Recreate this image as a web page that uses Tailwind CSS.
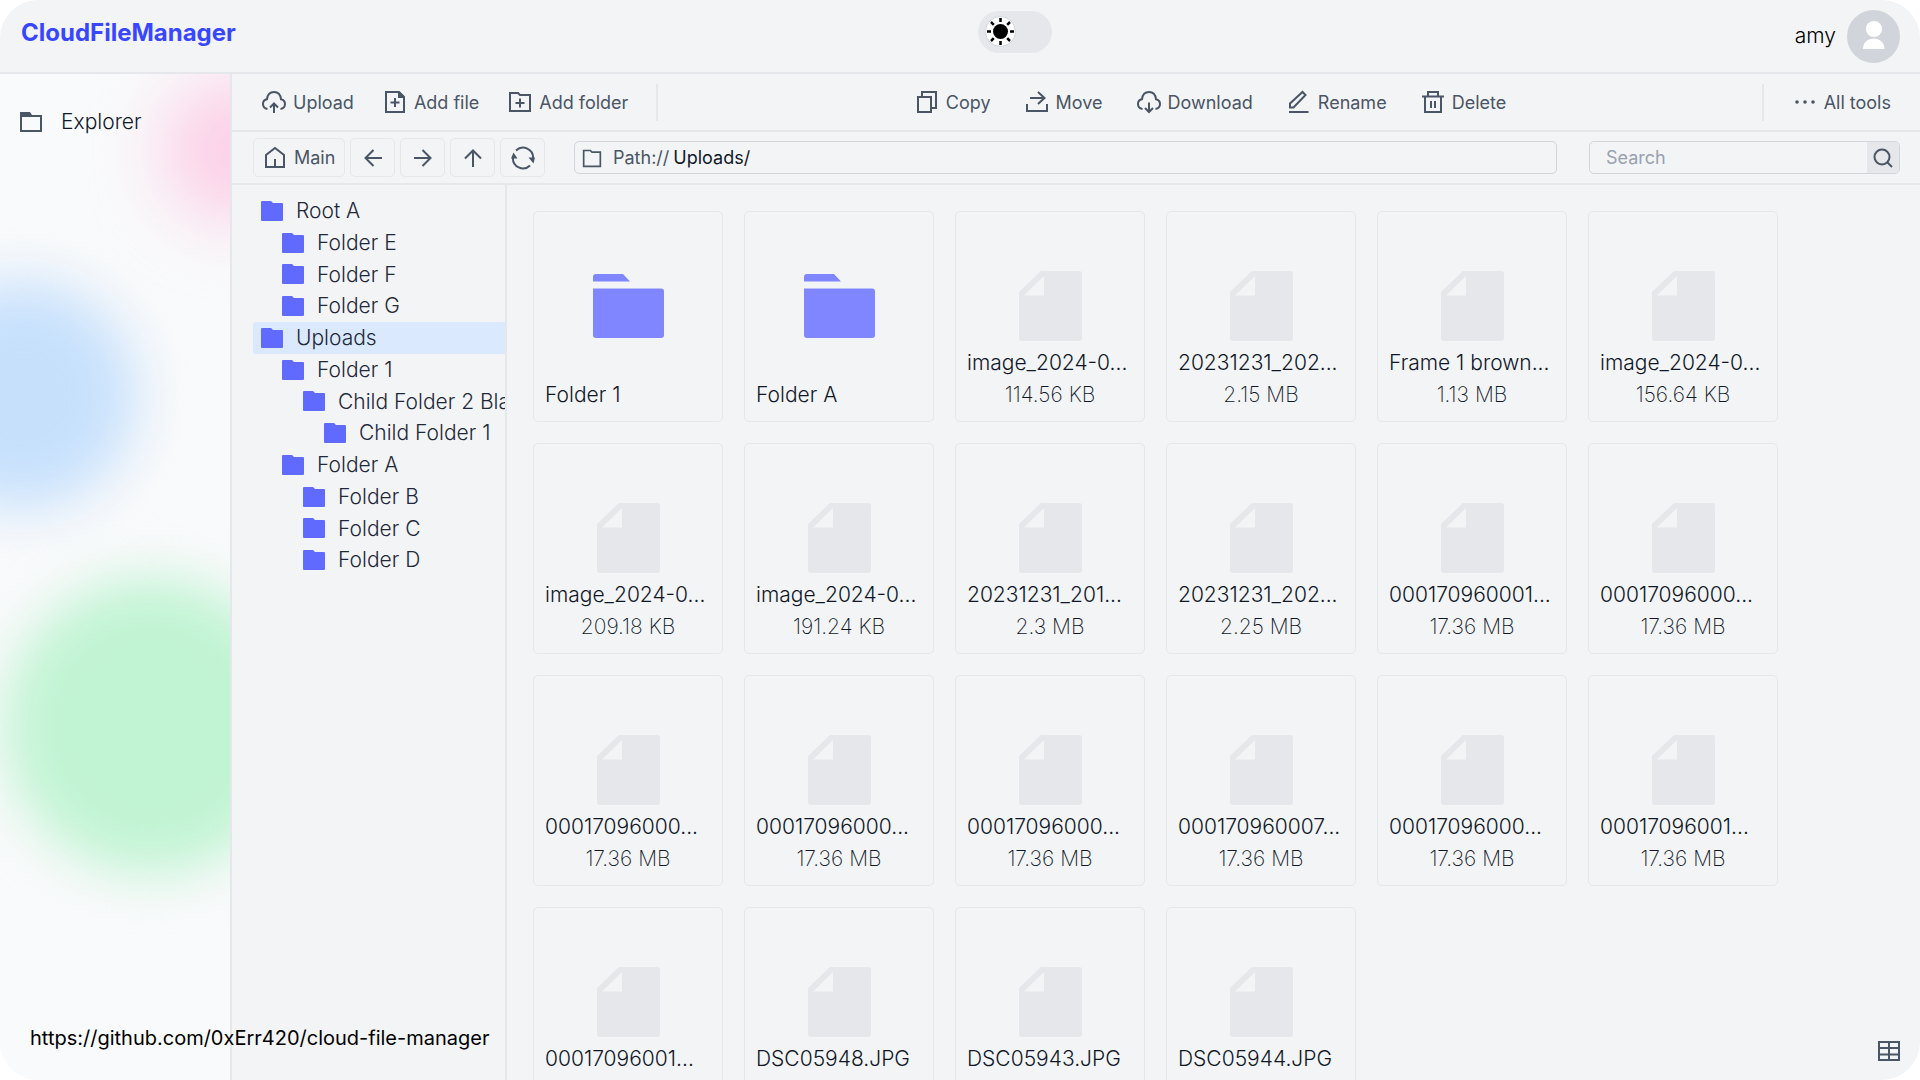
<!DOCTYPE html>
<html lang="en">
<head>
<meta charset="utf-8">
<meta name="viewport" content="width=device-width, initial-scale=1">
<title>CloudFileManager</title>
<script src="https://cdn.jsdelivr.net/npm/@tailwindcss/browser@4"></script>
</head>
<body class="bg-white font-['Inter',sans-serif]">
<svg class="hidden" aria-hidden="true">
  <symbol id="i-folder" viewBox="0 0 24 24"><path d="M2 3h8l2 2h10v17H2z" fill="none" stroke="currentColor" stroke-width="2"/></symbol>
  <symbol id="i-tree" viewBox="0 0 22 20"><path d="M1 0h9l2 2h9q1 0 1 1v16q0 1-1 1H1q-1 0-1-1V1q0-1 1-1z" fill="currentColor"/></symbol>
  <symbol id="i-bigfolder" viewBox="0 0 71 64"><path d="M0 7.500V3Q0 0 3 0H30L37 7.500zM0 14.500H68Q71 14.500 71 17.500V61Q71 64 68 64H3Q0 64 0 61z" fill="currentColor"/></symbol>
  <symbol id="i-file" viewBox="0 0 63 70"><path fill-rule="evenodd" d="M22 0H60Q63 0 63 3V67Q63 70 60 70H3Q0 70 0 67V21zM25 5L5 24.500H25z" fill="currentColor"/></symbol>
</svg>

<div class="relative flex h-screen flex-col overflow-hidden rounded-[38px] bg-gray-100">
  <header class="flex h-[74px] shrink-0 items-start justify-between border-b-2 border-gray-200 pl-[21px] pr-5">
    <a href="#" class="mt-[17px] text-2xl font-bold text-[#3847ff]">CloudFileManager</a>
    <button type="button" role="switch" aria-checked="false" aria-label="Dark theme" class="mt-[11px] flex h-[42px] w-[74px] rounded-full bg-gray-200 pl-[7px] pt-[5px]">
      <svg class="size-[31px]" viewBox="0 0 31 31"><circle cx="15.500" cy="15.500" r="15" fill="#fff" stroke="#d1d5db"/><circle cx="15.500" cy="15.500" r="7.500"/><path d="M15.500 2v4M15.500 25v4M2 15.500h4M25 15.500h4M6 6l2.800 2.800M22.200 22.200L25 25M25 6l-2.800 2.800M8.800 22.200L6 25" stroke="#000" stroke-width="2.500"/></svg>
    </button>
    <div class="mt-[10px] flex items-center gap-[11px]">
      <span class="pb-[2px] text-[21px] font-light">amy</span>
      <svg class="size-[53px]" viewBox="0 0 53 53"><circle cx="26.500" cy="26.500" r="26.500" fill="#d1d5db"/><circle cx="27" cy="19" r="8" fill="#fff"/><path d="M16 39C16 25 37.500 25 37.500 39z" fill="#fff"/></svg>
    </div>
  </header>

  <div class="flex min-h-0 flex-1">
    <aside class="relative w-[232px] shrink-0 overflow-hidden border-r-2 border-gray-200 bg-gray-50">
      <div class="absolute left-[163px] top-[4px] size-[144px] rounded-full bg-[#fccfe7] blur-[34px]"></div>
      <div class="absolute -left-[92px] top-[207px] size-[228px] rounded-full bg-[#c6e0fc] blur-[28px]"></div>
      <div class="absolute left-[3px] top-[504px] size-[296px] rounded-full bg-[#c1f4d3] blur-[26px]"></div>
      <nav class="relative pl-5 pt-8">
        <a href="#" class="flex items-center gap-[19px] text-[21px] leading-8 font-light text-gray-900">
          <svg class="h-5 w-[22px] text-gray-600" viewBox="0 0 22 20"><path d="M1 2v17h20V4H1" fill="none" stroke="currentColor" stroke-width="2"/><path d="M0 0h10l2 3h10v2H0z" fill="currentColor"/></svg>
          Explorer
        </a>
      </nav>
    </aside>

    <main class="flex min-w-0 flex-1 flex-col">
      <div class="flex h-[58px] shrink-0 items-center justify-between border-b-2 border-gray-200 px-[29px] text-[18px] text-gray-600">
        <div class="flex items-center gap-7">
          <button type="button" class="flex items-center gap-[6px]"><svg class="size-[26px]" viewBox="0 0 26 26" fill="none" stroke="currentColor" stroke-width="2"><path d="M6.500 20C3.500 19.500 2 17.500 2 15c0-2.500 1.700-4.500 4-4.800C6.500 6 9 3 13 3s6.500 3 7 7.200c2.500.5 4 2.300 4 4.800 0 2.500-1.500 4.500-4.500 5"/><path d="M13 24v-8M9 18.500l4-4 4 4"/></svg>Upload</button>
          <button type="button" class="flex items-center gap-[6px]"><svg class="size-[26px]" viewBox="0 0 26 26" fill="none" stroke="currentColor" stroke-width="2"><path d="M4 3h13l5 5v15H4zM13 9v9M8.500 13.500h9"/><path d="M16 3h2l4 4v2h-6z" fill="currentColor" stroke="none"/></svg>Add file</button>
          <button type="button" class="flex items-center gap-[6px]"><svg class="size-[26px]" viewBox="0 0 26 26" fill="none" stroke="currentColor" stroke-width="2"><path d="M3 4h8l2 2h10v16H3zM13 9.500v9M8.500 14h9"/></svg>Add folder</button>
          <span class="h-[37px] w-[2px] bg-gray-200"></span>
        </div>
        <div class="flex items-center gap-[33px]">
          <button type="button" class="flex items-center gap-[6px]"><svg class="size-[26px]" viewBox="0 0 26 26" fill="none" stroke="currentColor" stroke-width="2"><path d="M4 8h13v15H4zM8 7V3h14v16h-4"/></svg>Copy</button>
          <button type="button" class="flex items-center gap-[6px]"><svg class="size-[26px]" viewBox="0 0 26 26" fill="none" stroke="currentColor" stroke-width="2"><path d="M3 15v7h20v-7M6 9h14M14 3l6.500 6-6.500 6"/></svg>Move</button>
          <button type="button" class="flex items-center gap-[6px]"><svg class="size-[26px]" viewBox="0 0 26 26" fill="none" stroke="currentColor" stroke-width="2"><path d="M6.500 20C3.500 19.500 2 17.500 2 15c0-2.500 1.700-4.500 4-4.800C6.500 6 9 3 13 3s6.500 3 7 7.200c2.500.5 4 2.300 4 4.800 0 2.500-1.500 4.500-4.500 5"/><path d="M13 13.500v9M9 19l4 4 4-4"/></svg>Download</button>
          <button type="button" class="flex items-center gap-[6px]"><svg class="size-[26px]" viewBox="0 0 26 26" fill="none" stroke="currentColor" stroke-width="2"><path d="M3 23h19.500M4 18.500v-4L16.500 3l3 3L7.500 18.500z"/></svg>Rename</button>
          <button type="button" class="flex items-center gap-[6px]"><svg class="size-[26px]" viewBox="0 0 26 26" fill="none" stroke="currentColor" stroke-width="2"><path d="M2 7.500h22M8 7.500V3h10v4.500M5 7.500V23h16V7.500M11 12v7M15 12v7"/></svg>Delete</button>
        </div>
        <div class="flex items-center gap-7">
          <span class="h-[37px] w-[2px] bg-gray-200"></span>
          <button type="button" class="flex items-center gap-[6px]"><svg class="size-[26px]" viewBox="0 0 26 26" fill="currentColor"><circle cx="5" cy="13" r="1.800"/><circle cx="13" cy="13" r="1.800"/><circle cx="21" cy="13" r="1.800"/></svg>All tools</button>
        </div>
      </div>

      <div class="flex h-[53px] shrink-0 items-center border-b-2 border-gray-200 pl-[21px] pr-5 text-[18px] text-gray-600">
        <div class="flex gap-[5px]">
          <button type="button" class="flex h-[39px] w-[92px] items-center gap-2 rounded-[5px] border border-gray-200 pl-[10px]"><svg class="h-[21px] w-[22px]" viewBox="0 0 22 21" fill="none" stroke="currentColor" stroke-width="2"><path d="M2 20V8l9-7 9 7v12zM11 12v8"/></svg>Main</button>
          <button type="button" aria-label="Back" class="grid h-[39px] w-[45px] place-items-center rounded-[5px] border border-gray-200"><svg class="size-5" viewBox="0 0 20 20" fill="none" stroke="currentColor" stroke-width="2"><path d="M19 10H3M10.500 2L2.500 10l8 8"/></svg></button>
          <button type="button" aria-label="Forward" class="grid h-[39px] w-[45px] place-items-center rounded-[5px] border border-gray-200"><svg class="size-5" viewBox="0 0 20 20" fill="none" stroke="currentColor" stroke-width="2"><path d="M1 10h16M9.500 2l8 8-8 8"/></svg></button>
          <button type="button" aria-label="Up" class="grid h-[39px] w-[45px] place-items-center rounded-[5px] border border-gray-200"><svg class="size-5" viewBox="0 0 20 20" fill="none" stroke="currentColor" stroke-width="2"><path d="M10 19V3M2 10.500l8-8 8 8"/></svg></button>
          <button type="button" aria-label="Refresh" class="grid h-[39px] w-[45px] place-items-center rounded-[5px] border border-gray-200"><svg class="size-6" viewBox="0 0 24 24" fill="none" stroke="currentColor" stroke-width="2"><path d="M5 4.500A10 10 0 0 1 22 12.500M19 19.500A10 10 0 0 1 2 11.500"/><path d="M17.500 11.500H24l-1.500 6zM6.500 12.500H0l2.500-6z" fill="currentColor" stroke="none"/></svg></button>
        </div>
        <div class="ml-[29px] flex h-[33px] flex-1 items-center rounded-[5px] border border-gray-300 pl-[7px]">
          <svg class="size-5"><use href="#i-folder"/></svg>
          <label for="path" class="ml-[11px]">Path://</label>
          <input id="path" type="text" value="Uploads/" class="ml-1 w-full min-w-0 flex-1 text-gray-900 outline-none">
        </div>
        <form class="ml-8 flex h-[33px] w-[311px] overflow-hidden rounded-[5px] border border-gray-300">
          <input type="search" aria-label="Search" placeholder="Search" class="min-w-0 flex-1 pl-4 outline-none placeholder:text-gray-400">
          <button type="button" aria-label="Run search" class="grid w-8 place-items-center bg-gray-200"><svg class="size-5" viewBox="0 0 20 20" fill="none" stroke="currentColor" stroke-width="2"><circle cx="9" cy="9" r="7.500"/><path d="M14.500 14.500L19 19"/></svg></button>
        </form>
      </div>

      <div class="flex min-h-0 flex-1">
        <div class="w-[275px] shrink-0 overflow-hidden border-r-2 border-gray-200 pl-[21px] pt-[10px]">
          <ul id="tree" class="grid h-[381px] grid-rows-12 text-[21px] font-light text-gray-800"></ul>
        </div>
        <div id="files" class="flex min-w-0 flex-1 flex-wrap content-start gap-[21px] overflow-hidden pl-[26px] pr-5 pt-[26px] text-[21px] leading-8 font-light text-gray-900"></div>
      </div>
    </main>
  </div>

  <a href="https://github.com/0xErr420/cloud-file-manager" class="absolute bottom-6 left-[30px] text-[20px] leading-9 text-black">https://github.com/0xErr420/cloud-file-manager</a>
  <button type="button" aria-label="Table view" class="absolute bottom-[19px] right-5 text-gray-600"><svg class="block h-5 w-[22px]" viewBox="0 0 22 20" fill="none" stroke="currentColor" stroke-width="2"><path d="M1 1h20v18H1zM11 1v18M1 7h20M1 13.500h20"/></svg></button>
</div>

<script>
const tree = [['Root A', 0], ['Folder E', 1], ['Folder F', 1], ['Folder G', 1], ['Uploads', 0], ['Folder 1', 1], ['Child Folder 2 Bla', 2], ['Child Folder 1', 3], ['Folder A', 1], ['Folder B', 2], ['Folder C', 2], ['Folder D', 2]];
const indent = ['pl-2', 'pl-[29px]', 'pl-[50px]', 'pl-[71px]'];
document.getElementById('tree').innerHTML = tree.map(([name, depth]) =>
  `<li class="min-h-0"><a href="#" class="flex h-full items-center gap-[13px] rounded-l-[3px] whitespace-nowrap ${indent[depth]} ${name === 'Uploads' ? 'bg-[#dbe9fe]' : ''}"><svg class="h-5 w-[22px] shrink-0 text-[#616aff]"><use href="#i-tree"/></svg>${name}</a></li>`).join('');

const files = [['Folder 1'], ['Folder A'], ['image_2024-0...', '114.56 KB'], ['20231231_202...', '2.15 MB'], ['Frame 1 brown...', '1.13 MB'], ['image_2024-0...', '156.64 KB'],
  ['image_2024-0...', '209.18 KB'], ['image_2024-0...', '191.24 KB'], ['20231231_201...', '2.3 MB'], ['20231231_202...', '2.25 MB'], ['000170960001...', '17.36 MB'], ['00017096000...', '17.36 MB'],
  ['00017096000...', '17.36 MB'], ['00017096000...', '17.36 MB'], ['00017096000...', '17.36 MB'], ['000170960007...', '17.36 MB'], ['00017096000...', '17.36 MB'], ['00017096001...', '17.36 MB'],
  ['00017096001...', '\u00a0'], ['DSC05948.JPG', '\u00a0'], ['DSC05943.JPG', '\u00a0'], ['DSC05944.JPG', '\u00a0']];
document.getElementById('files').innerHTML = files.map(([name, size]) =>
  `<article class="flex h-[211px] w-[190px] flex-col rounded-[5px] border border-gray-200 px-[11px] pt-[54px] pb-[10px]">
    <div class="grid h-20 place-items-center">${size
      ? '<svg class="h-[70px] w-[63px] text-gray-200"><use href="#i-file"/></svg>'
      : '<svg class="h-16 w-[71px] text-[#7f86ff]"><use href="#i-bigfolder"/></svg>'}</div>
    <p class="mt-auto whitespace-nowrap">${name}</p>
    ${size ? `<p class="text-center font-extralight">${size}</p>` : ''}
  </article>`).join('');
</script>
</body>
</html>
